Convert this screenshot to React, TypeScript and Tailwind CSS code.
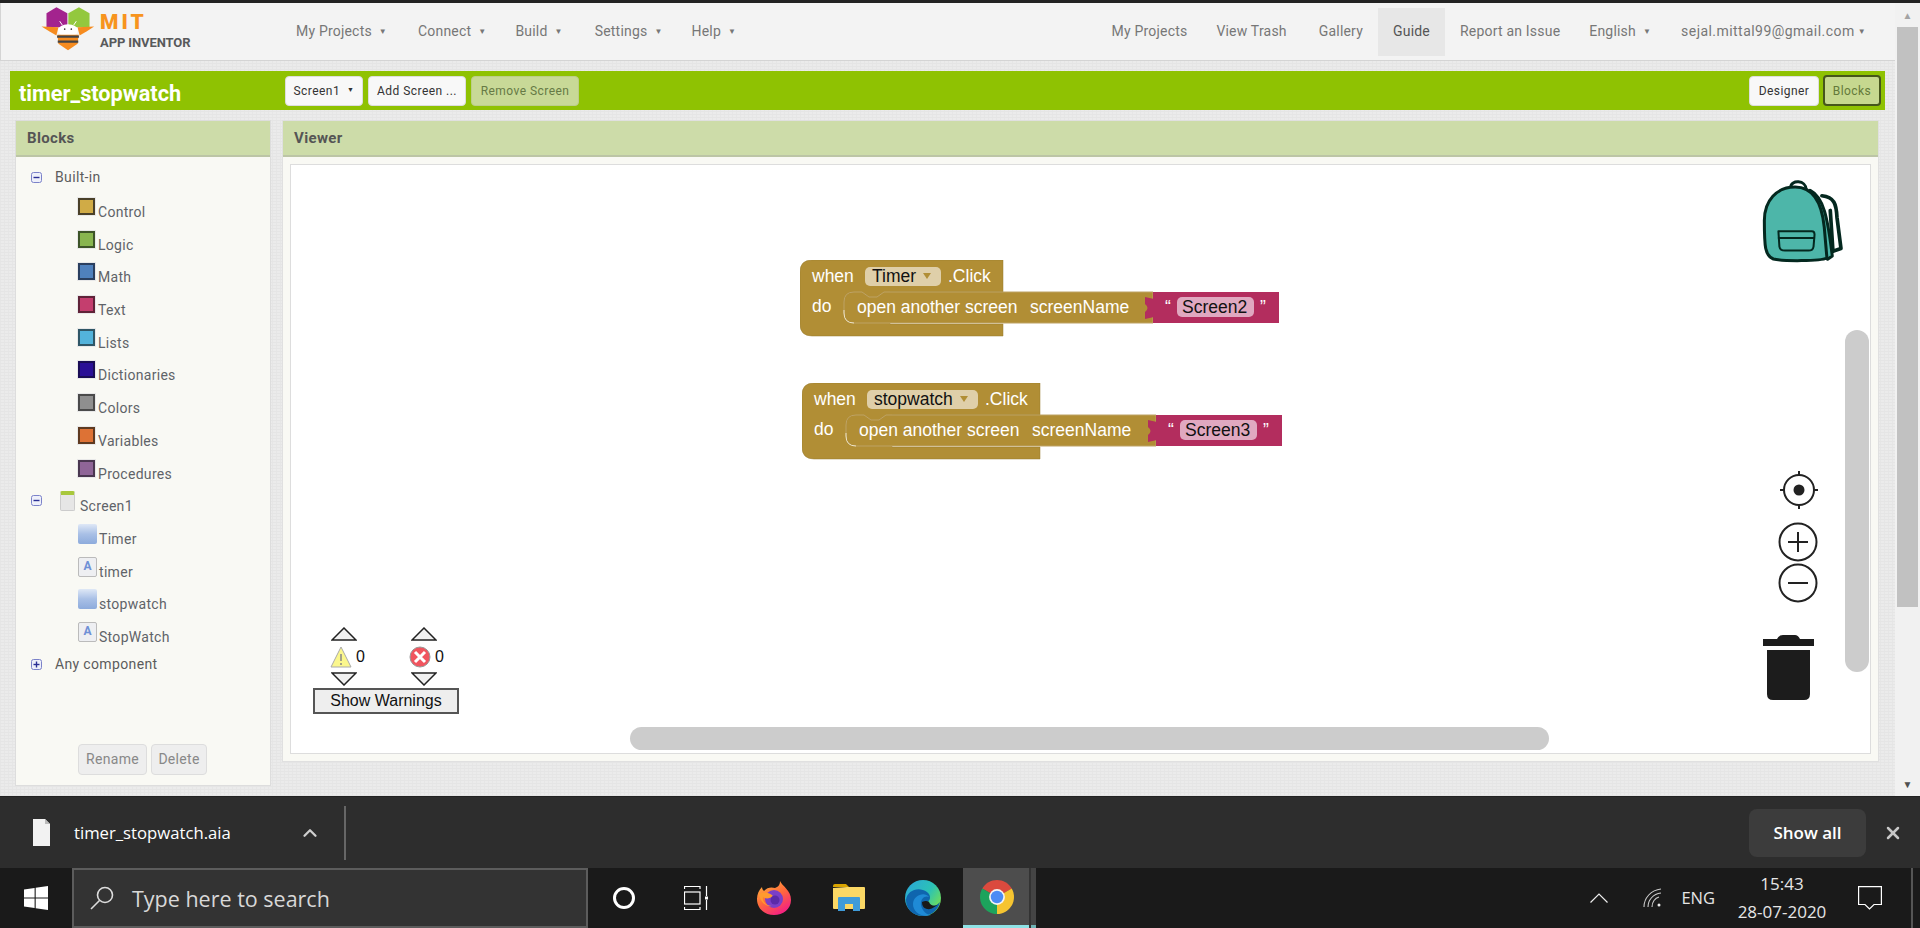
import { ChevronUp, X } from "lucide-react";

function NavItem({ label, drop, active, tightCaret, className = "" }: { label: string; drop?: boolean; active?: boolean; tightCaret?: boolean; className?: string }) {
  return (
    <div className={`flex items-center h-[48px] tracking-[0.2px] ${active ? "bg-[#e7e7e7] text-[#555]" : "text-[#777]"} ${className}`}>
      {label}
      {drop && <span className={`${tightCaret ? "ml-[3px]" : "ml-[7px]"} text-[8px] leading-none`}>▼</span>}
    </div>
  );
}

function Logo() {
  return (
    <div className="flex items-start ml-[38px] w-[157px] h-[52px]">
      <svg viewBox="120 10 180 145" className="w-[60px] h-[48px] shrink-0 mt-[-2px]">
        <polygon points="142,38 172,20 205,38 205,80 142,80" fill="#a3238e" />
        <polygon points="208,38 240,20 272,38 272,80 208,80" fill="#93c83e" />
        <path d="M127 78 L178 80 L172 105 L150 92 Z" fill="#f68b1f" />
        <path d="M286 78 L236 80 L242 105 L264 92 Z" fill="#f68b1f" />
        <path d="M182 62 L190 74 M232 62 L224 74" stroke="#fff" strokeWidth="3" fill="none" />
        <ellipse cx="207" cy="90" rx="30" ry="19" fill="#fff" />
        <circle cx="197" cy="86" r="2.5" fill="#333" />
        <circle cx="217" cy="86" r="2.5" fill="#333" />
        <path d="M175 103 H239 L236 130 L207 150 L178 130 Z" fill="#f68b1f" />
        <path d="M174 105 H240 V112 H174 Z M176 120 H238 V127 H176 Z" fill="#444" />
      </svg>
      <div className="ml-[1px] mt-[4px] flex flex-col">
        <span className="font-['Roboto'] font-black text-[21px] leading-[25px] tracking-[3px] text-[#f7941e]">MIT</span>
        <span className="font-['Roboto'] font-bold text-[13px] leading-[15px] tracking-[-0.1px] text-[#58595b] whitespace-nowrap">APP INVENTOR</span>
      </div>
    </div>
  );
}

function GreenButton({ label, drop, className = "" }: { label: string; drop?: boolean; className?: string }) {
  return (
    <div className={`h-[30px] flex items-center justify-center rounded-[4px] bg-[#f8f8f8] border border-[#ddd] text-[12px] text-[#333] tracking-[0.45px] whitespace-nowrap ${className}`}>
      {label}
      {drop && <span className="ml-[7px] text-[7px]">▼</span>}
    </div>
  );
}

function PanelHeader({ title }: { title: string }) {
  return (
    <div className="h-[36px] bg-[#cddca9] border-b-2 border-[#bcc5a6] flex items-center px-[11px] text-[15px] font-bold tracking-[0.35px] text-[#555] shrink-0">
      {title}
    </div>
  );
}

function PlusMinus({ plus }: { plus?: boolean }) {
  return (
    <svg viewBox="0 0 11 11" className="w-[11px] h-[11px] shrink-0">
      <rect x="0.5" y="0.5" width="10" height="10" rx="2" fill="#eef0fa" stroke="#7b82c9" />
      <path d="M2.5 5.5 H8.5" stroke="#2b2f94" strokeWidth="1.4" />
      {plus && <path d="M5.5 2.5 V8.5" stroke="#2b2f94" strokeWidth="1.4" />}
    </svg>
  );
}

function TreeHead({ label, plus, className = "" }: { label: string; plus?: boolean; className?: string }) {
  return (
    <div className={`flex items-center ml-[15px] h-[20px] text-[#5c5c5c] tracking-[0.35px] ${className}`}>
      <PlusMinus plus={plus} />
      <span className="ml-[13px]">{label}</span>
    </div>
  );
}

function DrawerRow({ label, color, border }: { label: string; color: string; border: string }) {
  return (
    <div className="flex items-start h-[32.7px] ml-[62px]">
      <span className="w-[17px] h-[17px] mt-[3px] border-2 shrink-0 outline outline-1 outline-[#e8e8e8]" style={{ backgroundColor: color, borderColor: border }} />
      <span className="ml-[3px] mt-[7px] leading-[20px] tracking-[0.3px] text-[#5f6368]">{label}</span>
    </div>
  );
}

function ComponentRow({ label, kind }: { label: string; kind: "button" | "label" }) {
  return (
    <div className="flex items-start h-[32.6px] ml-[62px]">
      {kind === "button" ? (
        <span className="w-[19px] h-[20px] rounded-[2px] shrink-0 bg-gradient-to-b from-[#dfe8f6] via-[#a9c0e6] to-[#8dabdc]" />
      ) : (
        <span className="w-[19px] h-[20px] rounded-[2px] shrink-0 bg-[#eeeff2] border border-[#bbb] text-[#6f8fd6] font-bold text-[12px] leading-[16px] text-center">A</span>
      )}
      <span className="ml-[2px] mt-[5px] leading-[20px] tracking-[0.3px] text-[#5f6368]">{label}</span>
    </div>
  );
}

function EventBlock({ comp, fieldW, topW, screen, pinkX }: { comp: string; fieldW: number; topW: number; screen: string; pinkX: number }) {
  const textCls = "font-['Liberation_Sans'] text-[17.5px]";
  const clickX = 65 + fieldW + 7;
  return (
    <svg width="482" height="78" viewBox="0 0 482 78">
      <path
        d={`M12 0 H${topW} V32 H90 V64 H${topW} V76 H12 Q0 76 0 64 V12 Q0 0 12 0 Z`}
        fill="#b18e35"
        stroke="#97782c"
        strokeWidth="0.5"
      />
      <path d={`M44 42 Q44 32 54 32 H62 L69 37 H77 L84 32 H${pinkX} V63 H54 Q44 63 44 53 Z`} fill="#b18e35" stroke="#bda265" strokeWidth="1" />
      <path d="M44 50 V53 Q44 63 54 63" fill="none" stroke="#ece2c6" strokeWidth="1" />
      <rect x={pinkX} y="32" width="126" height="31" fill="#b32d5e" />
      <path d={`M${pinkX + 1} 39 L${pinkX - 8} 37 V44 Q${pinkX - 3} 48 ${pinkX - 8} 52 V59 L${pinkX + 1} 57 Z`} fill="#b32d5e" />
      <rect x="65" y="7" width={fieldW} height="19" rx="5" fill="#dfcfa9" />
      <rect x={pinkX + 24} y="37" width="77" height="20" rx="5" fill="#e0a8c0" />
      <path d={`M${65 + fieldW - 18} 13 h8 l-4 6 z`} fill="#b18e35" />
      <text x="12" y="22" fill="#fff" className={textCls}>when</text>
      <text x="72" y="22" fill="#111" className={textCls}>{comp}</text>
      <text x={clickX} y="22" fill="#fff" className={textCls}>.Click</text>
      <text x="12" y="52" fill="#fff" className={textCls}>do</text>
      <text x="57" y="53" fill="#fff" className={textCls}>open another screen</text>
      <text x="230" y="53" fill="#fff" className={textCls}>screenName</text>
      <text x={pinkX + 12} y="53" fill="#fff" className={textCls}>“</text>
      <text x={pinkX + 29} y="53" fill="#111" className={textCls}>{screen}</text>
      <text x={pinkX + 107} y="53" fill="#fff" className={textCls}>”</text>
    </svg>
  );
}

function Backpack() {
  return (
    <svg viewBox="120 50 260 260" className="w-[87px] h-[87px]" fill="none" stroke="#04281f" strokeLinecap="round" strokeLinejoin="round">
      <path d="M305 106 C342 110 348 130 350 170 L362 264 L338 272 L330 150" strokeWidth="11" fill="#fff" />
      <path d="M270 90 C310 110 322 170 336 286 L322 296 L250 250 Z" strokeWidth="9" fill="#4db6a9" />
      <path d="M212 80 C212 58 258 58 258 88" strokeWidth="9" />
      <path d="M160 295 C135 285 133 260 133 180 C133 120 170 80 225 80 C280 80 305 130 312 200 L320 292 C300 302 190 302 160 295 Z" strokeWidth="9" fill="#4db6a9" />
      <path d="M175 212 H275 Q283 212 283 222 L280 258 Q278 270 265 270 H195 Q180 270 178 258 Z" strokeWidth="6" />
      <path d="M176 232 H282" strokeWidth="6" />
    </svg>
  );
}

function Triangle({ down }: { down?: boolean }) {
  return (
    <svg viewBox="0 0 26 14" className="w-[26px] h-[14px]">
      <polygon points={down ? "1,1 25,1 13,13" : "13,1 25,13 1,13"} fill="#f1f1f1" stroke="#222" strokeWidth="1.5" />
    </svg>
  );
}

function Counter({ error }: { error?: boolean }) {
  return (
    <div className="flex flex-col items-start w-[50px]">
      <div className="ml-[2px]"><Triangle /></div>
      <div className="flex items-center h-[31px] ml-[1px] font-['Liberation_Sans'] text-[16px] text-[#111]">
        {error ? (
          <svg viewBox="0 0 22 22" className="w-[22px] h-[22px] ml-[-1px]">
            <circle cx="11" cy="11" r="10" fill="#f0555f" stroke="#999" strokeWidth="1" />
            <path d="M6 6 L16 16 M16 6 L6 16" stroke="#fff" strokeWidth="3" />
          </svg>
        ) : (
          <svg viewBox="0 0 22 22" className="w-[22px] h-[22px]">
            <polygon points="11,1 21,21 1,21" fill="#fbf78d" stroke="#aaa" strokeWidth="1" strokeLinejoin="round" />
            <path d="M11 8 V15 M11 17 V19" stroke="#888" strokeWidth="1.5" />
          </svg>
        )}
        <span className="ml-[4px]">0</span>
      </div>
      <div className="ml-[2px]"><Triangle down /></div>
    </div>
  );
}

function Firefox() {
  return (
    <svg viewBox="0 0 36 36" className="w-[36px] h-[36px]">
      <defs>
        <linearGradient id="ffa" x1="0" y1="0" x2="0.6" y2="1">
          <stop offset="0" stopColor="#ffbd3f" />
          <stop offset="0.55" stopColor="#ff6a3a" />
          <stop offset="1" stopColor="#f5247f" />
        </linearGradient>
      </defs>
      <path d="M24 1 C26 6 35 10 35 20 C35 29 27 35 18 35 C9 35 1 29 1 19 C1 14 3 10 6 7 C6 9 7 10 8 11 C11 7 16 7 19 8 C22 7 24 5 24 1 Z" fill="url(#ffa)" />
      <circle cx="18" cy="19" r="9" fill="#7b3fc7" />
      <path d="M3 14 C8 11 14 13 17 16 C14 19 9 19 7 17 C6 21 10 26 16 26 C11 27 4 23 3 14 Z" fill="#ff9a2e" />
      <circle cx="19" cy="20" r="4.5" fill="#5b2aa8" />
    </svg>
  );
}

function Explorer() {
  return (
    <svg viewBox="0 0 32 28" className="w-[32px] h-[28px]">
      <path d="M0 2 Q0 0 2 0 H13 L16 3 H0 Z" fill="#d9a400" />
      <path d="M0 4 L14 3 H31 Q32 3 32 4 V24 Q32 25 31 25 H1 Q0 25 0 24 Z" fill="#fbd865" />
      <path d="M5 14 Q5 13 6 13 H26 Q27 13 27 14 V27 H20 V20 H12 V27 H5 Z" fill="#3f9bd9" />
    </svg>
  );
}

function Edge() {
  return (
    <svg viewBox="0 0 36 36" className="w-[36px] h-[36px]">
      <defs>
        <linearGradient id="edg" x1="0" y1="0" x2="1" y2="0.7">
          <stop offset="0" stopColor="#2aa5dc" />
          <stop offset="0.6" stopColor="#2cc2b5" />
          <stop offset="1" stopColor="#76e04f" />
        </linearGradient>
      </defs>
      <circle cx="18" cy="18" r="18" fill="url(#edg)" />
      <path d="M1 20 C2 10 14 6 22 12 C27 16 25 21 22 22 C26 28 32 26 35 22 C33 31 25 36 18 36 C8 36 1 29 1 20 Z" fill="#0f65ae" />
      <path d="M8 24 C8 15 20 11 24 17 C20 15 15 19 16 25 C17 31 22 35 26 35 C16 38 8 32 8 24 Z" fill="#1f8ad6" />
      <path d="M17 22 C22 20 24 22 24 22 C26 27 32 27 35 22 C33 25 27 30 22 29 C18 28 17 25 17 22 Z" fill="#1a1a1a" />
    </svg>
  );
}

function Chrome() {
  return (
    <svg viewBox="0 0 24 24" className="w-[34px] h-[34px] ml-[2px]">
      <path d="M12 12 L1.61 6 A12 12 0 0 1 22.39 6 Z" fill="#db4a3e" />
      <path d="M12 12 L22.39 6 A12 12 0 0 1 12 24 Z" fill="#f5c431" />
      <path d="M12 12 L12 24 A12 12 0 0 1 1.61 6 Z" fill="#1da35c" />
      <circle cx="12" cy="12" r="5.6" fill="#f4f4f4" />
      <circle cx="12" cy="12" r="4.4" fill="#4b8bf5" />
    </svg>
  );
}

export default function App() {
  const drawers = [
    ["Control", "#d0ab46", "#4a4028"],
    ["Logic", "#88b54f", "#3d5428"],
    ["Math", "#4f81bd", "#2a3f5f"],
    ["Text", "#c43e6e", "#5f2338"],
    ["Lists", "#53b3db", "#2f5666"],
    ["Dictionaries", "#2a0f96", "#1a0d55"],
    ["Colors", "#8f8f8f", "#4a4a4a"],
    ["Variables", "#dd7235", "#5e3a20"],
    ["Procedures", "#8f6597", "#4a3750"],
  ];

  return (
    <div className="w-[1920px] h-[928px] overflow-hidden flex flex-col bg-[#1a1a1a] font-['Roboto',sans-serif] text-[14px]">
      <div className="h-[3px] bg-[#222] shrink-0" />

      <div className="flex flex-1 min-h-0">
        {/* page */}
        <div className="flex-1 min-w-0 flex flex-col bg-[#ebebeb] bg-[image:repeating-linear-gradient(0deg,#e5e5e5_0,#e5e5e5_1px,transparent_1px,transparent_3px),repeating-linear-gradient(90deg,#e6e6e6_0,#e6e6e6_1px,transparent_1px,transparent_4px)]">
          <div className="h-[58px] bg-[#f3f3f3] border-b border-[#d4d4d4] border-l flex items-center shrink-0">
            <Logo />
            <div className="flex items-center ml-[100px]">
              <NavItem label="My Projects" drop />
              <NavItem label="Connect" drop className="ml-[31px]" />
              <NavItem label="Build" drop className="ml-[29px]" />
              <NavItem label="Settings" drop className="ml-[32px]" />
              <NavItem label="Help" drop className="ml-[29px]" />
            </div>
            <div className="flex items-center ml-auto mr-[29px]">
              <NavItem label="My Projects" />
              <NavItem label="View Trash" className="ml-[29px]" />
              <NavItem label="Gallery" className="ml-[32px]" />
              <NavItem label="Guide" active className="ml-[15px] px-[15px]" />
              <NavItem label="Report an Issue" className="ml-[15px]" />
              <NavItem label="English" drop className="ml-[29px]" />
              <NavItem label="sejal.mittal99@gmail.com" drop tightCaret className="ml-[30px] !tracking-[0.45px]" />
            </div>
          </div>

          {/* project bar */}
          <div className="mt-[10px] ml-[10px] mr-[10px] h-[39px] bg-[#8fc202] flex items-center shrink-0">
            <div className="w-[275px] pl-[9px] text-white font-bold text-[21.7px] mt-[8px]">timer_stopwatch</div>
            <GreenButton label="Screen1" drop className="w-[78px]" />
            <GreenButton label="Add Screen ..." className="w-[98px] ml-[5px]" />
            <GreenButton label="Remove Screen" className="w-[108px] ml-[5px] !bg-[#c8d997] !text-[#667a45] !border-[#bccd8a]" />
            <GreenButton label="Designer" className="w-[70px] ml-auto" />
            <GreenButton label="Blocks" className="w-[58px] ml-[4px] mr-[4px] !bg-[#c6d88f] !text-[#647a3a] !border-2 !border-[#46561c] h-[31px]" />
          </div>

          {/* workspace */}
          <div className="flex items-start mt-[10px] ml-[15px] mr-[16px]">
            <div className="w-[256px] h-[666px] flex flex-col bg-[#f9f9f4] border border-[#ddd]">
              <PanelHeader title="Blocks" />
              <div className="relative flex-1 flex flex-col">
                <TreeHead label="Built-in" className="mt-[10px]" />
                <div className="mt-[8px]">
                  {drawers.map(([label, color, border]) => (
                    <DrawerRow key={label} label={label} color={color} border={border} />
                  ))}
                </div>
                <div className="flex items-start ml-[15px] h-[33px] text-[#5f6368] mt-[2px]">
                  <span className="mt-[4px]"><PlusMinus /></span>
                  <span className="w-[15px] h-[20px] ml-[18px] rounded-[2px] bg-[#e6e6e6] border border-[#ccc] border-t-[4px] border-t-[#a8c83c] shrink-0" />
                  <span className="ml-[5px] mt-[5px] leading-[20px] tracking-[0.3px]">Screen1</span>
                </div>
                <ComponentRow label="Timer" kind="button" />
                <ComponentRow label="timer" kind="label" />
                <ComponentRow label="stopwatch" kind="button" />
                <ComponentRow label="StopWatch" kind="label" />
                <TreeHead label="Any component" plus />
                <div className="mt-auto mb-[10px] ml-[62px] flex gap-[4px] text-[#888]">
                  <div className="w-[69px] h-[31px] rounded-[4px] bg-[#eee] border border-[#ddd] flex items-center justify-center tracking-[0.3px]">Rename</div>
                  <div className="w-[56px] h-[31px] rounded-[4px] bg-[#eee] border border-[#ddd] flex items-center justify-center tracking-[0.3px]">Delete</div>
                </div>
              </div>
            </div>

            <div className="ml-[11px] flex-1 h-[642px] flex flex-col bg-[#f9f9f4] border border-[#e0e0e0]">
              <PanelHeader title="Viewer" />
              <div className="relative flex-1 m-[7px] bg-white border border-[#ddd]">
                <div className="absolute left-[509px] top-[95px]">
                  <EventBlock comp="Timer" fieldW={76} topW={203} screen="Screen2" pinkX={353} />
                </div>
                <div className="absolute left-[511px] top-[218px]">
                  <EventBlock comp="stopwatch" fieldW={111} topW={238} screen="Screen3" pinkX={354} />
                </div>

                <div className="absolute left-[1469px] top-[12px]">
                  <Backpack />
                </div>

                <svg viewBox="0 0 40 40" className="absolute left-[1488px] top-[305px] w-[40px] h-[40px]" fill="none" stroke="#222">
                  <circle cx="20" cy="20" r="15" strokeWidth="2" />
                  <circle cx="20" cy="20" r="5.5" fill="#222" stroke="none" />
                  <path d="M20 1 V6 M20 34 V39 M1 20 H6 M34 20 H39" strokeWidth="2" />
                </svg>
                <svg viewBox="0 0 40 40" className="absolute left-[1487px] top-[357px] w-[40px] h-[40px]" fill="none" stroke="#222">
                  <circle cx="20" cy="20" r="18.5" strokeWidth="2" />
                  <path d="M20 10 V30 M10 20 H30" strokeWidth="2" />
                </svg>
                <svg viewBox="0 0 40 40" className="absolute left-[1487px] top-[398px] w-[40px] h-[40px]" fill="none" stroke="#222">
                  <circle cx="20" cy="20" r="18.5" strokeWidth="2" />
                  <path d="M10 20 H30" strokeWidth="2" />
                </svg>
                <svg viewBox="0 0 51 65" className="absolute left-[1472px] top-[470px] w-[51px] h-[65px]" fill="#1c1c1c">
                  <path d="M0 4 H14 Q16 0 20 0 H32 Q35 0 37 4 H51 V11 H0 Z" />
                  <path d="M4 15 H47 V59 Q47 65 41 65 H10 Q4 65 4 59 Z" />
                </svg>

                <div className="absolute left-[1554px] top-[165px] w-[24px] h-[342px] rounded-full bg-[#ccc]" />
                <div className="absolute left-[339px] top-[562px] w-[919px] h-[23px] rounded-full bg-[#ccc]" />

                <div className="absolute left-[22px] top-[462px] flex flex-col">
                  <div className="flex pl-[16px] gap-[30px]">
                    <Counter />
                    <Counter error />
                  </div>
                  <div className="mt-[2px] w-[146px] h-[26px] border-2 border-[#555] bg-[#eee] flex items-center justify-center font-['Liberation_Sans'] text-[16px] text-[#111]">
                    Show Warnings
                  </div>
                </div>
              </div>
            </div>
          </div>
        </div>

        {/* browser scrollbar */}
        <div className="w-[25px] shrink-0 bg-[#f1f1f1] flex flex-col items-center">
          <div className="h-[24px] flex items-center text-[10px] text-[#a3a3a3]">▲</div>
          <div className="w-[21px] h-[580px] bg-[#c1c1c1]" />
          <div className="mt-auto h-[24px] flex items-center text-[10px] text-[#505050]">▼</div>
        </div>
      </div>

      {/* download bar */}
      <div className="h-[72px] shrink-0 bg-[#2d2d2d] border-t border-[#222] flex items-center font-['Open_Sans'] text-white">
        <svg viewBox="0 0 17 27" className="w-[17px] h-[27px] ml-[33px]">
          <path d="M0 0 H12 L17 5 V27 H0 Z" fill="#f2f2f2" />
          <path d="M12 0 V5 H17 Z" fill="#bbb" />
        </svg>
        <span className="ml-[24px] text-[16.7px] w-[200px]">timer_stopwatch.aia</span>
        <ChevronUp className="w-[22px] h-[22px] ml-[25px] text-[#cfcfcf]" strokeWidth={2.5} />
        <div className="ml-[23px] w-[2px] h-[54px] bg-[#666]" />
        <div className="ml-auto w-[117px] h-[48px] rounded-[8px] bg-[#3c3c3c] flex items-center justify-center font-semibold text-[17px]">Show all</div>
        <X className="w-[20px] h-[20px] ml-[17px] mr-[17px] text-[#c8c8c8]" strokeWidth={3} />
      </div>

      {/* taskbar */}
      <div className="h-[60px] shrink-0 bg-[#1a1a1a] flex items-center font-['Open_Sans'] text-[#e6e6e6]">
        <svg viewBox="0 0 24 24" className="w-[24px] h-[24px] ml-[24px]" fill="#fff">
          <path d="M0 3.4 L10.6 2 V11.5 H0 Z M11.7 1.8 L24 0 V11.5 H11.7 Z M0 12.6 H10.6 V22 L0 20.6 Z M11.7 12.6 H24 V24 L11.7 22.2 Z" />
        </svg>
        <div className="ml-[24px] w-[516px] h-[60px] border-2 border-[#5c5c5c] bg-[#333] flex items-center">
          <svg viewBox="0 0 24 24" className="w-[24px] h-[24px] ml-[16px]" fill="none" stroke="#ddd" strokeWidth="1.6">
            <circle cx="15" cy="9" r="7.5" />
            <path d="M9.5 14.5 L1 23" />
          </svg>
          <span className="ml-[18px] mt-[3px] text-[21.5px] text-[#d8d8d8]">Type here to search</span>
        </div>
        <div className="ml-[25px] w-[22px] h-[22px] rounded-full border-[3px] border-white" />
        <svg viewBox="0 0 24 24" className="w-[24px] h-[24px] ml-[49px]" fill="none" stroke="#fff" strokeWidth="1.2">
          <path d="M0.5 3 V0.5 H16 V3 M0.5 21 V23.5 H16 V21" />
          <rect x="0.5" y="6" width="15.5" height="12" />
          <path d="M22.5 0 V10 M22.5 14 V24" />
          <rect x="21" y="10.5" width="3" height="3" fill="#fff" stroke="none" />
        </svg>
        <div className="ml-[48px]"><Firefox /></div>
        <div className="ml-[41px]"><Explorer /></div>
        <div className="ml-[40px]"><Edge /></div>
        <div className="ml-[22px] flex h-full">
          <div className="w-[66px] h-full bg-[#4d4d4d] border-b-[3px] border-[#8fe3e6] flex items-center justify-center"><Chrome /></div>
          <div className="w-[2px] h-full bg-[#333]" />
          <div className="w-[5px] h-full bg-[#444] border-b-[3px] border-[#6fb4b6]" />
        </div>

        <div className="ml-auto flex items-center h-full">
          <svg viewBox="0 0 18 10" className="w-[18px] h-[10px]" fill="none" stroke="#eee" strokeWidth="1.2">
            <path d="M0.5 9.5 L9 1 L17.5 9.5" />
          </svg>
          <svg viewBox="0 0 20 20" className="w-[20px] h-[20px] ml-[35px]" fill="none" stroke="#ccc" strokeWidth="1.1">
            <path d="M1 19 C1 10 8 2 18 1 M5 19 C5 12 10 6 18 5 M9 19 C9 14 12 10 16 9" />
            <circle cx="16" cy="17" r="1.5" fill="#eee" stroke="none" />
          </svg>
          <span className="ml-[18px] text-[16.5px]">ENG</span>
          <div className="ml-[17px] w-[100px] flex flex-col items-center text-[17px] leading-[28px]">
            <span>15:43</span>
            <span>28-07-2020</span>
          </div>
          <svg viewBox="0 0 24 24" className="w-[24px] h-[24px] ml-[26px]" fill="none" stroke="#fff" strokeWidth="1.2">
            <path d="M0.6 0.6 H23.4 V18.5 H16 L11.5 23 L7 18.5 H0.6 Z" />
          </svg>
          <div className="ml-[29px] w-[2px] h-full bg-[#555] mr-[7px]" />
        </div>
      </div>
    </div>
  );
}
